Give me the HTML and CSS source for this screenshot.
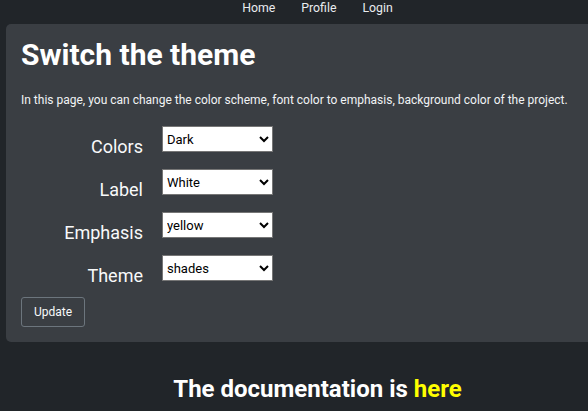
FILE: index.html
```html
<!DOCTYPE html>
<html lang="en">
<head>
<meta charset="utf-8">
<title>Switch the theme</title>
<link rel="stylesheet" href="styles.css">
</head>
<body>
<div class="page">
  <nav class="nav">
    <a href="#">Home</a>
    <a href="#">Profile</a>
    <a href="#">Login</a>
  </nav>
  <main class="card">
    <h1 class="title">Switch the theme</h1>
    <p class="intro">In this page, you can change the color scheme, font color to emphasis, background color of the project.</p>
    <form class="form">
      <div class="row">
        <label class="label">Colors</label>
        <select class="select"><option>Dark</option></select>
      </div>
      <div class="row">
        <label class="label">Label</label>
        <select class="select"><option>White</option></select>
      </div>
      <div class="row">
        <label class="label">Emphasis</label>
        <select class="select"><option>yellow</option></select>
      </div>
      <div class="row">
        <label class="label">Theme</label>
        <select class="select"><option>shades</option></select>
      </div>
      <button type="button" class="btn">Update</button>
    </form>
  </main>
  <footer class="footer">
    <h2 class="doc">The documentation is <a href="#" class="here">here</a></h2>
  </footer>
</div>
</body>
</html>
```

FILE: styles.css
```css
html, body {
  margin: 0;
  padding: 0;
  background: #212529;
  overflow: hidden;
}
body {
  font-family: Roboto, "Liberation Sans", sans-serif;
  color: #f8f9fa;
}
.page {
  width: 635px;
}
.nav {
  height: 24px;
  display: flex;
  justify-content: center;
  align-items: flex-start;
  gap: 26px;
}
.nav a {
  color: #e9ecef;
  text-decoration: none;
  font-size: 12.3px;
  line-height: 17px;
}
.card {
  margin-left: 6px;
  background: #3a3e43;
  border-radius: 5px;
  padding: 13px 15px 15px;
  box-sizing: border-box;
  height: 318px;
}
.title {
  margin: 0;
  font-size: 30px;
  font-weight: 700;
  line-height: 36px;
  color: #ffffff;
}
.intro {
  margin: 19px 0 0;
  font-size: 12px;
  line-height: 16px;
  color: #f1f3f5;
}
.form {
  margin-top: 18px;
}
.row {
  display: grid;
  grid-template-columns: 122px 111px;
  column-gap: 19px;
  align-items: start;
  height: 43px;
}
.label {
  text-align: right;
  font-size: 18px;
  line-height: 22px;
  padding-top: 10px;
  color: #f8f9fa;
}
.select {
  width: 111px;
  height: 26px;
  font-family: Roboto, "Liberation Sans", sans-serif;
  font-size: 13px;
  color: #000;
  background: #fff;
  border: 1px solid #767676;
  border-radius: 0;
}
.btn {
  display: block;
  margin-top: -1px;
  width: 64px;
  height: 30px;
  background: transparent;
  border: 1px solid #6c757d;
  border-radius: 3px;
  color: #f8f9fa;
  font-family: Roboto, "Liberation Sans", sans-serif;
  font-size: 12px;
}
.footer {
  text-align: center;
  padding-top: 32px;
}
.doc {
  margin: 0;
  font-size: 24px;
  font-weight: 700;
  line-height: 30px;
  color: #ffffff;
}
.here {
  color: #ffff00;
  text-decoration: none;
}
```
